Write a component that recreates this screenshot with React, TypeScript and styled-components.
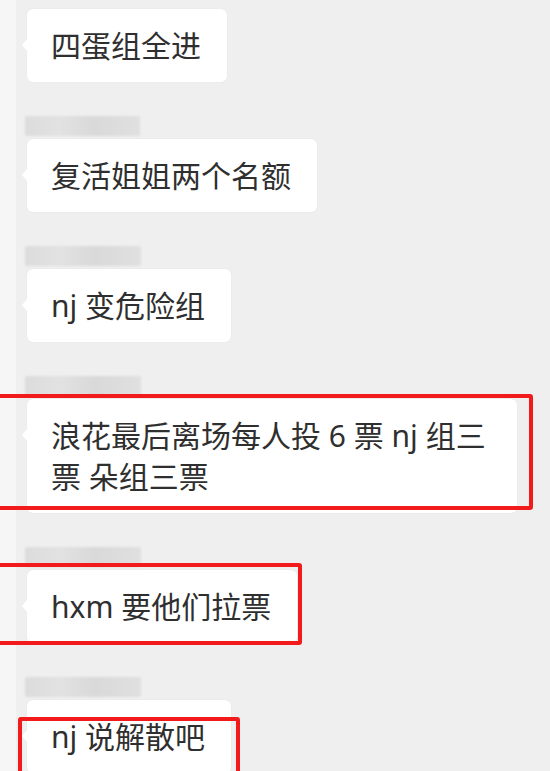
import React from "react";
import styled, { createGlobalStyle } from "styled-components";

const Global = createGlobalStyle`
  html, body { margin: 0; padding: 0; background: #efefef; }
  body { width: 550px; height: 771px; overflow: hidden; }
  #root { width: 550px; height: 771px; }
`;

const Page = styled.div`
  display: flex;
  width: 550px;
  height: 771px;
  overflow: hidden;
  background: #efefef;
  font-family: "Noto Sans", "Noto Sans CJK SC", sans-serif;
`;

const SideStrip = styled.div`
  flex: 0 0 16px;
  background: #f6f6f6;
`;

const ChatColumn = styled.div`
  flex: 1;
  display: flex;
  flex-direction: column;
  gap: 34px;
  padding: 9px 0 0 11px;
`;

const Message = styled.div`
  position: relative;
  display: flex;
  flex-direction: column;
  align-items: flex-start;
  gap: 3px;
`;

const SenderName = styled.div<{ $w: number }>`
  width: ${(p) => p.$w}px;
  height: 20px;
  margin-left: -2px;
  border-radius: 2px;
  background: linear-gradient(90deg, #dcdcdc 0%, #e2e2e2 30%, #d9d9d9 60%, #e0e0e0 100%);
  filter: blur(1.2px);
`;

const Bubble = styled.div`
  position: relative;
  box-sizing: border-box;
  max-width: 490px;
  padding: 16px 26px 16px 24px;
  background: #ffffff;
  border-radius: 6px;
  box-shadow: 0 0 2px rgba(0, 0, 0, 0.06);
  color: #2f2f2f;
  font-size: 30px;
  line-height: 41px;
  word-break: break-all;

  &::before {
    content: "";
    position: absolute;
    left: -5px;
    top: 30px;
    border-style: solid;
    border-width: 6px 5px 6px 0;
    border-color: transparent #ffffff transparent transparent;
  }
`;

const Highlight = styled.div<{ $top: number; $left: number; $w: number; $h: number }>`
  position: absolute;
  top: ${(p) => p.$top}px;
  left: ${(p) => p.$left}px;
  width: ${(p) => p.$w}px;
  height: ${(p) => p.$h}px;
  box-sizing: border-box;
  border: 4px solid #f21a1a;
  border-radius: 3px;
  pointer-events: none;
`;

type Msg = {
  text: string;
  name?: number;
  box?: { top: number; left: number; w: number; h: number };
};

const messages: Msg[] = [
  { text: "四蛋组全进" },
  { text: "复活姐姐两个名额", name: 115 },
  { text: "nj 变危险组", name: 116 },
  {
    text: "浪花最后离场每人投 6 票 nj 组三票 朵组三票",
    name: 116,
    box: { top: 18, left: -31, w: 537, h: 116 },
  },
  {
    text: "hxm 要他们拉票",
    name: 116,
    box: { top: 16, left: -31, w: 306, h: 82 },
  },
  {
    text: "nj 说解散吧",
    name: 116,
    box: { top: 40, left: -9, w: 222, h: 80 },
  },
];

export default function App() {
  return (
    <Page>
      <Global />
      <SideStrip />
      <ChatColumn>
        {messages.map((m, i) => (
          <Message key={i}>
            {m.name ? <SenderName $w={m.name} /> : null}
            <Bubble>{m.text}</Bubble>
            {m.box ? (
              <Highlight $top={m.box.top} $left={m.box.left} $w={m.box.w} $h={m.box.h} />
            ) : null}
          </Message>
        ))}
      </ChatColumn>
    </Page>
  );
}
